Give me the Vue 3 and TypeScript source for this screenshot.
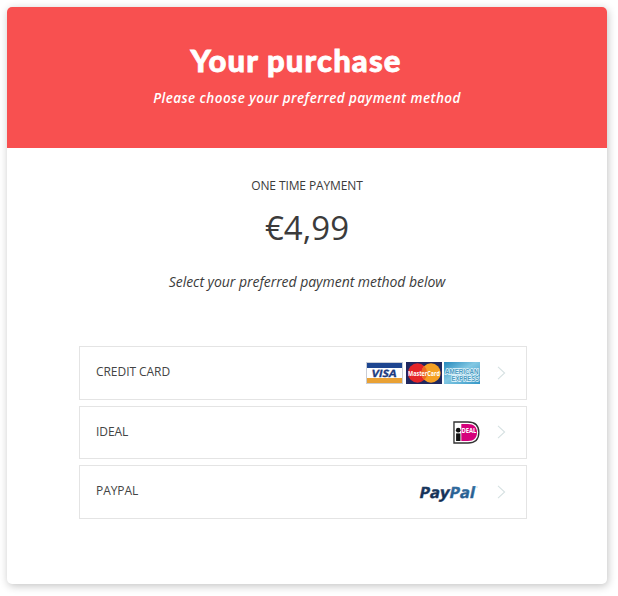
<script setup lang="ts">
interface Method {
  id: 'card' | 'ideal' | 'paypal'
  label: string
}

const methods: Method[] = [
  { id: 'card', label: 'CREDIT CARD' },
  { id: 'ideal', label: 'IDEAL' },
  { id: 'paypal', label: 'PAYPAL' },
]
</script>

<template>
  <div class="page">
    <main class="card">
      <header class="header">
        <h1 class="title">Your purchase</h1>
        <p class="subtitle">Please choose your preferred payment method</p>
      </header>
      <section class="summary">
        <div class="kind">ONE TIME PAYMENT</div>
        <div class="price">€4,99</div>
        <p class="hint">Select your preferred payment method below</p>
      </section>
      <div class="methods">
        <button v-for="m in methods" :key="m.id" class="method" type="button">
          <span class="label">{{ m.label }}</span>
          <span class="logos">
            <template v-if="m.id === 'card'">
              <svg width="37" height="22" viewBox="0 0 37 22">
                <rect x=".5" y=".5" width="36" height="21" fill="#fff" stroke="#c9cdd6" />
                <rect x="1" y="1" width="35" height="5" fill="#1d4590" />
                <rect x="1" y="16" width="35" height="5" fill="#e9a134" />
                <text transform="translate(5 14.8) skewX(-12)" class="visa" textLength="25" lengthAdjust="spacingAndGlyphs">VISA</text>
              </svg>
              <svg width="36" height="22" viewBox="0 0 36 22">
                <rect width="36" height="22" fill="#20285f" />
                <circle cx="11.5" cy="11" r="9.7" fill="#e42529" />
                <circle cx="25" cy="11" r="9.7" fill="#f5a023" />
                <path d="M18.25 4a9.7 9.7 0 0 1 0 14a9.7 9.7 0 0 1 0-14z" fill="#ed6a25" />
                <text x="2" y="13.6" class="mastercard" textLength="32" lengthAdjust="spacingAndGlyphs">MasterCard</text>
              </svg>
              <svg width="36" height="22" viewBox="0 0 36 22">
                <defs>
                  <linearGradient id="amex" x1="0" y1="0" x2="1" y2="1">
                    <stop offset="0" stop-color="#2589bd" />
                    <stop offset=".45" stop-color="#83c8e3" />
                    <stop offset="1" stop-color="#3497c7" />
                  </linearGradient>
                </defs>
                <rect width="36" height="22" fill="url(#amex)" />
                <text x="1" y="12" class="amex" textLength="33.5" lengthAdjust="spacingAndGlyphs">AMERICAN</text>
                <text x="7.5" y="18.6" class="amex" textLength="27.5" lengthAdjust="spacingAndGlyphs">EXPRESS</text>
              </svg>
            </template>
            <svg v-else-if="m.id === 'ideal'" width="27" height="23" viewBox="0 0 28 23" preserveAspectRatio="none">
              <path d="M1 1h14.5c7.5 0 11.3 4.2 11.3 10.5S23 22 15.5 22H1z" fill="#fff" stroke="#333" stroke-width="1.4" />
              <path d="M8.6 3h6.9c6.2 0 9.4 3.2 9.4 8.5S21.7 20 15.5 20H8.6z" fill="#d5007b" />
              <circle cx="5.4" cy="9.2" r="2.4" fill="#111" />
              <rect x="3.2" y="12.4" width="4.5" height="7.6" fill="#111" />
              <text x="8.8" y="11.7" class="ideal" textLength="15.5" lengthAdjust="spacingAndGlyphs">DEAL</text>
            </svg>
            <svg v-else width="62" height="20" viewBox="0 0 62 20">
              <defs>
                <linearGradient id="pay" x1="0" y1="0" x2="0" y2="1">
                  <stop offset="0" stop-color="#1c3f6a" />
                  <stop offset="1" stop-color="#122a4d" />
                </linearGradient>
                <linearGradient id="pal" x1="0" y1="0" x2="0" y2="1">
                  <stop offset="0" stop-color="#3a78ab" />
                  <stop offset="1" stop-color="#1f5384" />
                </linearGradient>
              </defs>
              <text transform="translate(.5 15.6) skewX(-12)" class="wordmark" fill="url(#pay)" stroke="#17345a" textLength="30" lengthAdjust="spacingAndGlyphs">Pay</text>
              <text transform="translate(30.5 15.6) skewX(-12)" class="wordmark" fill="url(#pal)" stroke="#2c6597" textLength="25.500" lengthAdjust="spacingAndGlyphs">Pal</text>
              <circle cx="59" cy="5" r=".6" fill="#9db6cc" />
            </svg>
          </span>
          <svg class="chevron" width="9" height="14" viewBox="0 0 9 14">
            <path d="M1 .8L7.6 7L1 13.2" fill="none" stroke="#d6e1e2" stroke-width="1.1" />
          </svg>
        </button>
      </div>
    </main>
  </div>
</template>

<style>
body {
  background: #fff;
}
</style>

<style scoped>
.page {
  box-sizing: border-box;
  height: 596px;
  padding: 7px 11px 12px 7px;
  background: #fff;
}
.card {
  box-sizing: border-box;
  width: 600px;
  height: 577px;
  border-radius: 5px;
  overflow: hidden;
  background: #fff;
  box-shadow: 1px 2px 9px rgba(0, 0, 0, 0.24);
  font-family: "Open Sans", sans-serif;
  color: #3b3b3b;
  text-align: center;
  display: flex;
  flex-direction: column;
}
.header {
  height: 141px;
  box-sizing: border-box;
  padding-top: 34px;
  background: #f85050;
  color: #fff;
  font-family: Lato, sans-serif;
}
.title {
  margin: 0;
  padding-right: 22px;
  font-size: 31px;
  line-height: 38px;
  font-weight: 900;
  letter-spacing: 1.15px;
  -webkit-text-stroke: 0.8px #fff;
}
.subtitle {
  margin: 9px 0 0;
  font-family: "Open Sans", sans-serif;
  font-size: 13.5px;
  line-height: 20px;
  font-weight: 600;
  font-style: italic;
  letter-spacing: 0.44px;
}
.summary {
  height: 198px;
  box-sizing: border-box;
  padding-top: 29px;
}
.kind {
  font-size: 12px;
  line-height: 18px;
  letter-spacing: -0.11px;
}
.price {
  margin-top: 11px;
  font-size: 33px;
  line-height: 44px;
}
.hint {
  margin: 22px 0 0;
  font-size: 14px;
  line-height: 20px;
  font-style: italic;
  letter-spacing: -0.04px;
}
.methods {
  display: flex;
  flex-direction: column;
  gap: 6px;
  width: 448px;
  margin-left: 72px;
}
.method {
  box-sizing: border-box;
  display: flex;
  align-items: center;
  height: 53.5px;
  padding: 0 20px 0 16px;
  border: 1px solid #e4e4e4;
  background: #fff;
  font: 12px/18px "Open Sans", sans-serif;
  color: #444;
}
.label {
  flex: 1;
  text-align: left;
  padding-bottom: 1px;
  letter-spacing: -0.05px;
}
.logos {
  display: flex;
  gap: 2.4px;
  margin-right: 17px;
}
.logos svg {
  overflow: visible;
}
.chevron {
  display: block;
}
.visa {
  font: 700 10px "Open Sans", sans-serif;
  fill: #1d3b80;
  stroke: #1d3b80;
  stroke-width: 0.3px;
}
.mastercard {
  font: 700 6.5px "Open Sans", sans-serif;
  fill: #fff;
}
.amex {
  font: 700 6.5px "Liberation Sans", sans-serif;
  fill: #4b9bc2;
  stroke: #e5f5fb;
  stroke-width: 1.3px;
  paint-order: stroke;
}
.ideal {
  font: 700 6.5px "Open Sans", sans-serif;
  fill: #fff;
}
.wordmark {
  font: 700 15.5px "Open Sans", sans-serif;
  stroke-width: 0.4px;
}
</style>
